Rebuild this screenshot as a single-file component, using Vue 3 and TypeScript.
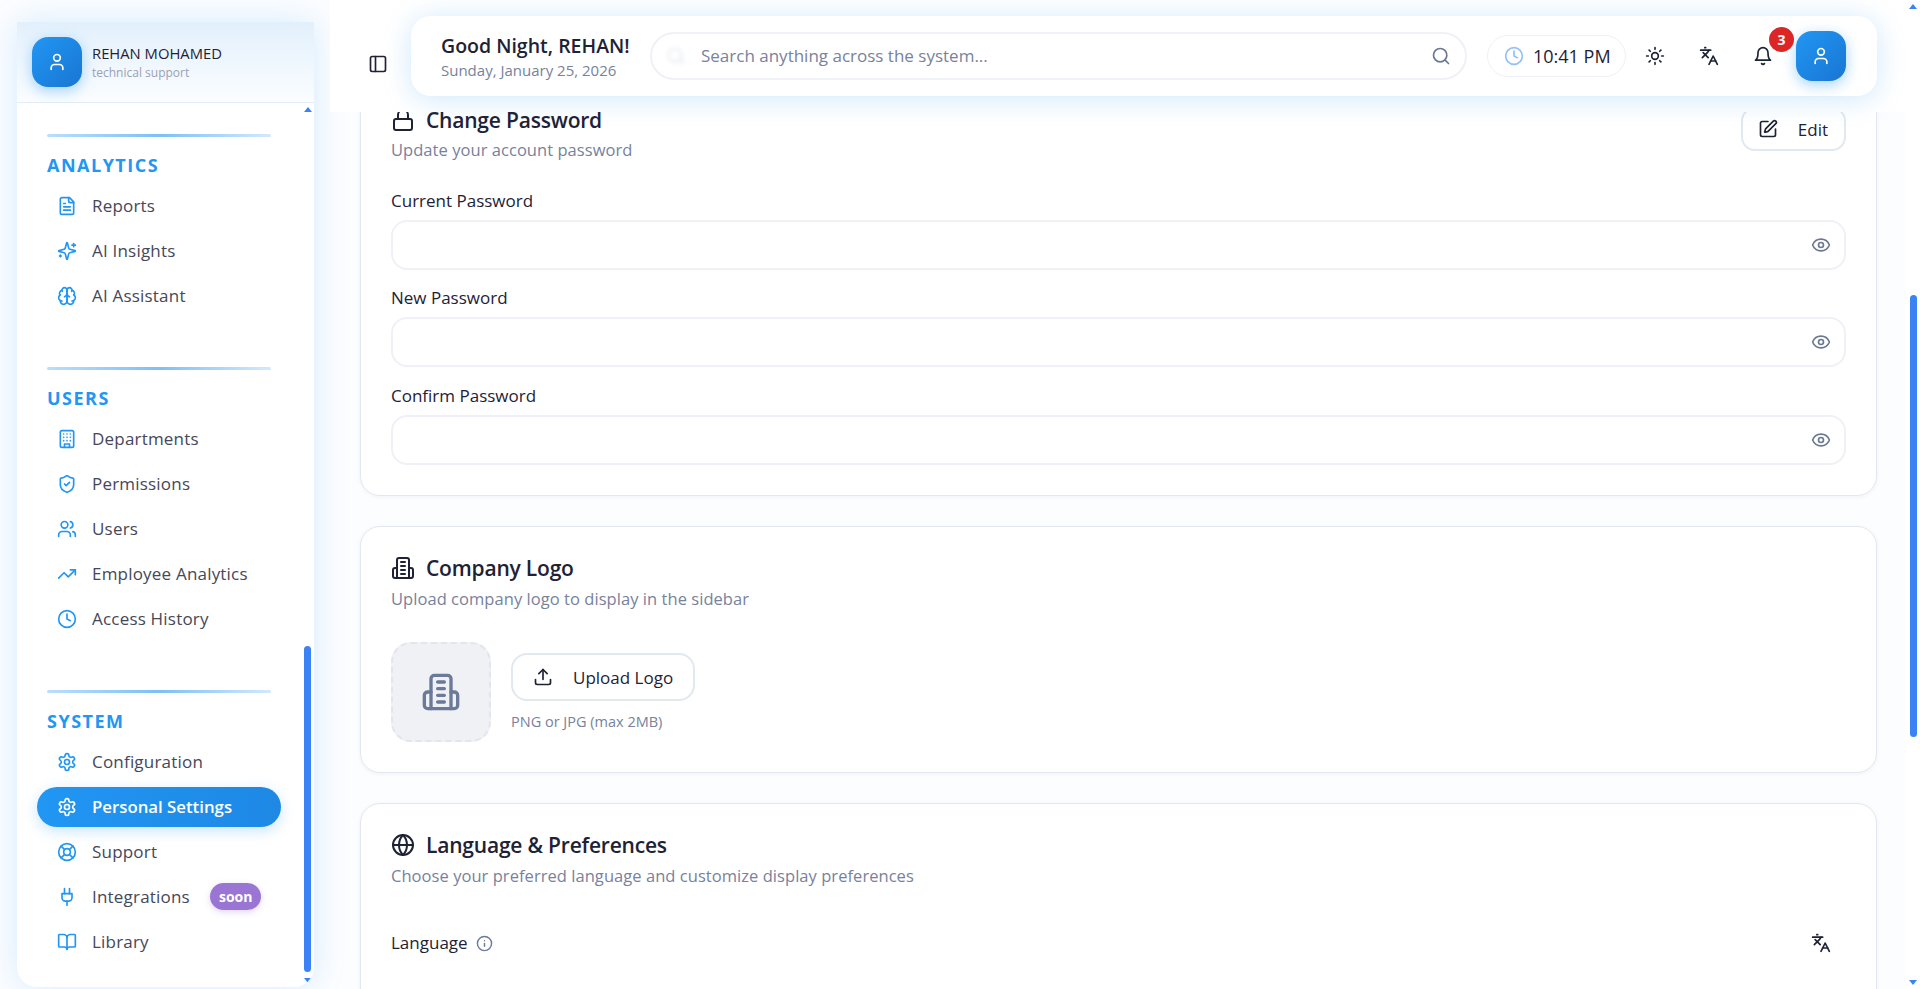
<script setup lang="ts">
import { h } from 'vue'

// Lucide icon bodies
const icons: Record<string, string> = {
  user: '<path d="M19 21v-2a4 4 0 0 0-4-4H9a4 4 0 0 0-4 4v2"/><circle cx="12" cy="7" r="4"/>',
  panel: '<rect width="18" height="18" x="3" y="3" rx="2"/><path d="M9 3v18"/>',
  file: '<path d="M15 2H6a2 2 0 0 0-2 2v16a2 2 0 0 0 2 2h12a2 2 0 0 0 2-2V7Z"/><path d="M14 2v4a2 2 0 0 0 2 2h4"/><path d="M10 9H8"/><path d="M16 13H8"/><path d="M16 17H8"/>',
  sparkles: '<path d="M9.937 15.5A2 2 0 0 0 8.5 14.063l-6.135-1.582a.5.5 0 0 1 0-.962L8.5 9.936A2 2 0 0 0 9.937 8.5l1.582-6.135a.5.5 0 0 1 .963 0L14.063 8.5A2 2 0 0 0 15.5 9.937l6.135 1.581a.5.5 0 0 1 0 .964L15.5 14.063a2 2 0 0 0-1.437 1.437l-1.582 6.135a.5.5 0 0 1-.963 0z"/><path d="M20 3v4"/><path d="M22 5h-4"/><path d="M4 17v2"/><path d="M5 18H3"/>',
  brain: '<path d="M12 5a3 3 0 1 0-5.997.125 4 4 0 0 0-2.526 5.77 4 4 0 0 0 .556 6.588A4 4 0 1 0 12 18Z"/><path d="M12 5a3 3 0 1 1 5.997.125 4 4 0 0 1 2.526 5.77 4 4 0 0 1-.556 6.588A4 4 0 1 1 12 18Z"/><path d="M15 13a4.5 4.5 0 0 1-3-4 4.5 4.5 0 0 1-3 4"/><path d="M17.599 6.5a3 3 0 0 0 .399-1.375"/><path d="M6.003 5.125A3 3 0 0 0 6.401 6.5"/><path d="M3.477 10.896a4 4 0 0 1 .585-.396"/><path d="M19.938 10.5a4 4 0 0 1 .585.396"/><path d="M6 18a4 4 0 0 1-1.967-.516"/><path d="M19.967 17.484A4 4 0 0 1 18 18"/>',
  building: '<rect width="16" height="20" x="4" y="2" rx="2" ry="2"/><path d="M9 22v-4h6v4"/><path d="M8 6h.01"/><path d="M16 6h.01"/><path d="M12 6h.01"/><path d="M12 10h.01"/><path d="M12 14h.01"/><path d="M16 10h.01"/><path d="M16 14h.01"/><path d="M8 10h.01"/><path d="M8 14h.01"/>',
  shield: '<path d="M20 13c0 5-3.5 7.5-7.66 8.95a1 1 0 0 1-.67-.01C7.5 20.5 4 18 4 13V6a1 1 0 0 1 1-1c2 0 4.5-1.2 6.24-2.72a1.17 1.17 0 0 1 1.52 0C14.51 3.81 17 5 19 5a1 1 0 0 1 1 1z"/><path d="m9 12 2 2 4-4"/>',
  users: '<path d="M16 21v-2a4 4 0 0 0-4-4H6a4 4 0 0 0-4 4v2"/><circle cx="9" cy="7" r="4"/><path d="M22 21v-2a4 4 0 0 0-3-3.87"/><path d="M16 3.13a4 4 0 0 1 0 7.75"/>',
  trending: '<polyline points="22 7 13.5 15.5 8.5 10.5 2 17"/><polyline points="16 7 22 7 22 13"/>',
  clock: '<circle cx="12" cy="12" r="10"/><polyline points="12 6 12 12 16 14"/>',
  settings: '<path d="M12.22 2h-.44a2 2 0 0 0-2 2v.18a2 2 0 0 1-1 1.73l-.43.25a2 2 0 0 1-2 0l-.15-.08a2 2 0 0 0-2.73.73l-.22.38a2 2 0 0 0 .73 2.73l.15.1a2 2 0 0 1 1 1.72v.51a2 2 0 0 1-1 1.74l-.15.09a2 2 0 0 0-.73 2.73l.22.38a2 2 0 0 0 2.73.73l.15-.08a2 2 0 0 1 2 0l.43.25a2 2 0 0 1 1 1.73V20a2 2 0 0 0 2 2h.44a2 2 0 0 0 2-2v-.18a2 2 0 0 1 1-1.73l.43-.25a2 2 0 0 1 2 0l.15.08a2 2 0 0 0 2.73-.73l.22-.39a2 2 0 0 0-.73-2.73l-.15-.08a2 2 0 0 1-1-1.74v-.5a2 2 0 0 1 1-1.74l.15-.09a2 2 0 0 0 .73-2.73l-.22-.38a2 2 0 0 0-2.73-.73l-.15.08a2 2 0 0 1-2 0l-.43-.25a2 2 0 0 1-1-1.73V4a2 2 0 0 0-2-2z"/><circle cx="12" cy="12" r="3"/>',
  buoy: '<circle cx="12" cy="12" r="10"/><path d="m4.93 4.93 4.24 4.24"/><path d="m14.83 9.17 4.24-4.24"/><path d="m14.83 14.83 4.24 4.24"/><path d="m9.17 14.83-4.24 4.24"/><circle cx="12" cy="12" r="4"/>',
  plug: '<path d="M12 22v-5"/><path d="M9 8V2"/><path d="M15 8V2"/><path d="M18 8v5a4 4 0 0 1-4 4h-4a4 4 0 0 1-4-4V8Z"/>',
  book: '<path d="M12 7v14"/><path d="M3 18a1 1 0 0 1-1-1V4a1 1 0 0 1 1-1h5a4 4 0 0 1 4 4 4 4 0 0 1 4-4h5a1 1 0 0 1 1 1v13a1 1 0 0 1-1 1h-6a3 3 0 0 0-3 3 3 3 0 0 0-3-3z"/>',
  search: '<circle cx="11" cy="11" r="8"/><path d="m21 21-4.3-4.3"/>',
  sun: '<circle cx="12" cy="12" r="4"/><path d="M12 2v2"/><path d="M12 20v2"/><path d="m4.93 4.93 1.41 1.41"/><path d="m17.66 17.66 1.41 1.41"/><path d="M2 12h2"/><path d="M20 12h2"/><path d="m6.34 17.66-1.41 1.41"/><path d="m19.07 4.93-1.41 1.41"/>',
  languages: '<path d="m5 8 6 6"/><path d="m4 14 6-6 2-3"/><path d="M2 5h12"/><path d="M7 2h1"/><path d="m22 22-5-10-5 10"/><path d="M14 18h6"/>',
  bell: '<path d="M6 8a6 6 0 0 1 12 0c0 7 3 9 3 9H3s3-2 3-9"/><path d="M10.3 21a1.94 1.94 0 0 0 3.4 0"/>',
  pen: '<path d="M12 3H5a2 2 0 0 0-2 2v14a2 2 0 0 0 2 2h14a2 2 0 0 0 2-2v-7"/><path d="M18.375 2.625a1 1 0 0 1 3 3l-9.013 9.014a2 2 0 0 1-.853.505l-2.873.84a.5.5 0 0 1-.62-.62l.84-2.873a2 2 0 0 1 .506-.852z"/>',
  eye: '<path d="M2.062 12.348a1 1 0 0 1 0-.696 10.75 10.75 0 0 1 19.876 0 1 1 0 0 1 0 .696 10.75 10.75 0 0 1-19.876 0"/><circle cx="12" cy="12" r="3"/>',
  lock: '<rect width="18" height="11" x="3" y="11" rx="2" ry="2"/><path d="M7 11V7a5 5 0 0 1 10 0v4"/>',
  company: '<path d="M6 22V4a2 2 0 0 1 2-2h8a2 2 0 0 1 2 2v18Z"/><path d="M6 12H4a2 2 0 0 0-2 2v6a2 2 0 0 0 2 2h2"/><path d="M18 12h2a2 2 0 0 1 2 2v6a2 2 0 0 1-2 2h-2"/><path d="M10 6h4"/><path d="M10 10h4"/><path d="M10 14h4"/><path d="M10 18h4"/>',
  upload: '<path d="M21 15v4a2 2 0 0 1-2 2H5a2 2 0 0 1-2-2v-4"/><polyline points="17 8 12 3 7 8"/><line x1="12" x2="12" y1="3" y2="15"/>',
  globe: '<circle cx="12" cy="12" r="10"/><path d="M12 2a14.5 14.5 0 0 0 0 20 14.5 14.5 0 0 0 0-20"/><path d="M2 12h20"/>',
  info: '<circle cx="12" cy="12" r="10"/><path d="M12 16v-4"/><path d="M12 8h.01"/>',
}

const Icon = (props: { name: string }) =>
  h('svg', {
    xmlns: 'http://www.w3.org/2000/svg',
    viewBox: '0 0 24 24',
    fill: 'none',
    stroke: 'currentColor',
    'stroke-width': 2,
    'stroke-linecap': 'round',
    'stroke-linejoin': 'round',
    innerHTML: icons[props.name],
  })
Icon.props = ['name']

interface NavItem {
  label: string
  icon: string
  active?: boolean
  badge?: string
}

const sections: { title: string; items: NavItem[] }[] = [
  {
    title: 'ANALYTICS',
    items: [
      { label: 'Reports', icon: 'file' },
      { label: 'AI Insights', icon: 'sparkles' },
      { label: 'AI Assistant', icon: 'brain' },
    ],
  },
  {
    title: 'USERS',
    items: [
      { label: 'Departments', icon: 'building' },
      { label: 'Permissions', icon: 'shield' },
      { label: 'Users', icon: 'users' },
      { label: 'Employee Analytics', icon: 'trending' },
      { label: 'Access History', icon: 'clock' },
    ],
  },
  {
    title: 'SYSTEM',
    items: [
      { label: 'Configuration', icon: 'settings' },
      { label: 'Personal Settings', icon: 'settings', active: true },
      { label: 'Support', icon: 'buoy' },
      { label: 'Integrations', icon: 'plug', badge: 'soon' },
      { label: 'Library', icon: 'book' },
    ],
  },
]

const passwordFields = ['Current Password', 'New Password', 'Confirm Password']
</script>

<template>
  <div class="shell">
    <aside class="sidebar">
      <div class="side-head">
        <div class="avatar"><Icon name="user" class="avatar-ic" /></div>
        <div class="who">
          <div class="who-name">REHAN MOHAMED</div>
          <div class="who-role">technical support</div>
        </div>
      </div>
      <nav class="nav">
        <section v-for="s in sections" :key="s.title" class="nav-section">
          <div class="nav-rule"></div>
          <h4 class="nav-title">{{ s.title }}</h4>
          <a
            v-for="item in s.items"
            :key="item.label"
            class="nav-item"
            :class="{ active: item.active }"
          >
            <Icon :name="item.icon" class="nav-ic" />
            <span class="nav-label">{{ item.label }}</span>
            <span v-if="item.badge" class="soon">{{ item.badge }}</span>
          </a>
        </section>
      </nav>
      <!-- custom scrollbar -->
      <i class="arrow up side-up"></i>
      <i class="side-thumb"></i>
      <i class="arrow down side-down"></i>
    </aside>

    <main class="main">
      <header class="header">
        <button class="toggle"><Icon name="panel" class="toggle-ic" /></button>
        <div class="topbar">
          <div class="greet">
            <div class="greet-title">Good Night, REHAN!</div>
            <div class="greet-date">Sunday, January 25, 2026</div>
          </div>
          <div class="search">
            <Icon name="search" class="search-ghost" />
            <span class="search-text">Search anything across the system...</span>
            <Icon name="search" class="search-ic" />
          </div>
          <div class="time">
            <Icon name="clock" class="time-ic" />
            <span class="time-text">10:41 PM</span>
          </div>
          <div class="tool first"><Icon name="sun" class="tool-ic" /></div>
          <div class="tool"><Icon name="languages" class="tool-ic" /></div>
          <div class="tool bell">
            <Icon name="bell" class="tool-ic" />
            <span class="bell-count">3</span>
          </div>
          <div class="avatar"><Icon name="user" class="avatar-ic" /></div>
        </div>
      </header>

      <div class="content">
        <div class="stack">
          <section class="card pass-card">
            <div class="card-head">
              <div>
                <h3 class="card-title"><Icon name="lock" class="title-ic" />Change Password</h3>
                <p class="card-desc">Update your account password</p>
              </div>
              <button class="btn edit-btn"><Icon name="pen" class="btn-ic" />Edit</button>
            </div>
            <div v-for="f in passwordFields" :key="f" class="field">
              <label class="field-label">{{ f }}</label>
              <div class="input"><Icon name="eye" class="eye-ic" /></div>
            </div>
          </section>

          <section class="card logo-card">
            <h3 class="card-title"><Icon name="company" class="title-ic" />Company Logo</h3>
            <p class="card-desc">Upload company logo to display in the sidebar</p>
            <div class="logo-row">
              <div class="logo-box"><Icon name="company" class="logo-ic" /></div>
              <div class="logo-side">
                <button class="btn upload-btn"><Icon name="upload" class="btn-ic" />Upload Logo</button>
                <div class="hint">PNG or JPG (max 2MB)</div>
              </div>
            </div>
          </section>

          <section class="card lang-card">
            <h3 class="card-title"><Icon name="globe" class="title-ic" />Language &amp; Preferences</h3>
            <p class="card-desc">Choose your preferred language and customize display preferences</p>
            <div class="lang-row">
              <span class="field-label inline">Language <Icon name="info" class="info-ic" /></span>
              <Icon name="languages" class="lang-ic" />
            </div>
          </section>
        </div>
      </div>
    </main>

    <div class="page-bar">
      <i class="arrow up page-up"></i>
      <i class="page-thumb"></i>
      <i class="arrow down page-down"></i>
    </div>
  </div>
</template>

<style>
html,
body {
  margin: 0;
  height: 100%;
  overflow: hidden;
  background: #fff;
}
</style>

<style scoped>
.shell {
  display: flex;
  height: 989px;
  overflow: hidden;
  background: #fcfdff;
  font-family: "Open Sans", "Noto Sans", sans-serif;
  color: #1e2235;
  position: relative;
}

/* Sidebar */
.sidebar {
  position: relative;
  flex: none;
  width: 297px;
  height: 965px;
  margin: 22px 17px 2px 17px;
  background: #fff;
  border-radius: 0 0 20px 20px;
  box-shadow: 0 0 32px rgba(33, 150, 243, 0.18);
  overflow: hidden;
}

.side-head {
  display: flex;
  align-items: center;
  gap: 10px;
  height: 80px;
  padding: 0 15px;
  background: linear-gradient(180deg, #e2f0fc 0%, #fbfdff 100%);
  border-bottom: 1px solid #e3edf7;
}

.avatar {
  display: flex;
  align-items: center;
  justify-content: center;
  flex: none;
  width: 50px;
  height: 50px;
  border-radius: 16px;
  background: linear-gradient(135deg, #2196f3, #1976d2);
  box-shadow: 0 4px 14px rgba(33, 150, 243, 0.4);
  color: #fff;
}

.avatar-ic {
  width: 20px;
  height: 20px;
}

.who-name {
  font-size: 14.8px;
  font-weight: 500;
  line-height: 18px;
  color: #1e2235;
}

.who-role {
  margin-top: 3px;
  font-size: 12px;
  line-height: 16px;
  color: #9aa1b4;
}

.nav {
  padding-top: 31px;
}

.nav-section {
  padding: 0 33px 0 20px;
  margin-bottom: 51px;
}

.nav-rule {
  height: 3px;
  margin: 0 0 16px 10px;
  border-radius: 2px;
  width: 224px;
  background: linear-gradient(90deg, #bbdefb, #7cc0f7 50%, #d3e9fc);
}

.nav-title {
  margin: 0 0 9px 10px;
  font-size: 18px;
  line-height: 24px;
  font-weight: 700;
  letter-spacing: 1.5px;
  color: #2196f3;
}

.nav-item {
  display: flex;
  align-items: center;
  gap: 15px;
  height: 40px;
  margin-bottom: 5px;
  padding-left: 20px;
  border-radius: 20px;
  font-size: 17px;
  font-weight: 500;
  letter-spacing: 0.2px;
  color: #45475a;
}

.nav-item:last-child {
  margin-bottom: 0;
}

.nav-label {
  margin-bottom: 2px;
}

.nav-ic {
  flex: none;
  width: 20px;
  height: 20px;
  color: #2196f3;
}

.nav-item.active {
  background: linear-gradient(90deg, #2196f3, #1e88e5);
  box-shadow: 0 4px 14px rgba(33, 150, 243, 0.25);
  color: #fff;
  font-size: 16.8px;
  font-weight: 600;
  letter-spacing: 0;
}

.nav-item.active .nav-ic {
  color: #fff;
}

.soon {
  margin: 0 0 1px 5px;
  padding: 0 9px;
  height: 27px;
  line-height: 27px;
  border-radius: 14px;
  background: #9b75d4;
  box-shadow: 0 2px 6px rgba(155, 117, 212, 0.3);
  color: #fff;
  font-size: 14px;
  font-weight: 700;
  letter-spacing: 0;
}

.arrow {
  position: absolute;
  width: 0;
  height: 0;
  border-left: 4px solid transparent;
  border-right: 4px solid transparent;
}

.arrow.up {
  border-bottom: 5px solid #3b82f6;
}

.arrow.down {
  border-top: 5px solid #3b82f6;
}

.side-up {
  top: 85px;
  right: 2px;
}

.side-down {
  bottom: 4px;
  right: 2px;
}

.side-thumb {
  position: absolute;
  top: 624px;
  right: 3px;
  width: 7px;
  height: 326px;
  border-radius: 4px;
  background: #3b82f6;
}

/* Main column */
.main {
  flex: 1;
  min-width: 0;
  display: flex;
  flex-direction: column;
  margin-left: -1px;
  margin-right: 15px;
}

.header {
  position: relative;
  z-index: 2;
  flex: none;
  display: flex;
  height: 112px;
  padding: 16px 28px 0 36px;
  box-sizing: border-box;
  background: #fff;
}

.toggle {
  flex: none;
  display: flex;
  align-items: center;
  justify-content: center;
  width: 24px;
  height: 96px;
  margin-right: 21px;
  padding: 0;
  border: 0;
  background: none;
  color: #1e2235;
}

.toggle-ic {
  width: 20px;
  height: 20px;
}

.topbar {
  flex: 1;
  display: flex;
  align-items: center;
  height: 80px;
  padding: 0 31px 0 30px;
  border-radius: 20px;
  background: #fff;
  box-shadow: 0 3px 28px rgba(33, 150, 243, 0.22);
}

.greet {
  flex: none;
  width: 209px;
}

.greet-title {
  font-size: 19.5px;
  line-height: 26px;
  font-weight: 600;
  color: #1e2235;
}

.greet-date {
  margin-top: 2px;
  font-size: 15px;
  line-height: 18px;
  color: #77829c;
}

.search {
  flex: none;
  display: flex;
  align-items: center;
  width: 817px;
  height: 48px;
  box-sizing: border-box;
  padding: 0 14px;
  border: 2px solid #f0f1f6;
  border-radius: 24px;
}

.search-ghost {
  flex: none;
  width: 20px;
  height: 20px;
  margin-right: 15px;
  color: #e6e8ee;
  filter: blur(2px);
}

.search-text {
  flex: 1;
  margin-bottom: 2px;
  font-size: 17px;
  color: #77829c;
}

.search-ic {
  width: 20px;
  height: 20px;
  color: #6b7890;
}

.time {
  flex: none;
  display: flex;
  align-items: center;
  gap: 9px;
  height: 42px;
  margin-left: 20px;
  padding: 0 16px;
  box-sizing: border-box;
  width: 139px;
  border: 1px solid #f0f1f6;
  border-radius: 21px;
  font-size: 18px;
  font-weight: 500;
  white-space: nowrap;
}

.time-text {
  margin-bottom: 1px;
}

.time-ic {
  flex: none;
  width: 20px;
  height: 20px;
  color: #93c1f6;
}

.tool {
  flex: none;
  display: flex;
  align-items: center;
  justify-content: center;
  width: 40px;
  height: 40px;
  margin-left: 14px;
  color: #1e2235;
}

.tool.first {
  margin-left: 9px;
}

.tool-ic {
  width: 20px;
  height: 20px;
}

.bell {
  position: relative;
  margin-right: 13px;
}

.bell-count {
  position: absolute;
  top: -9px;
  right: -11px;
  width: 25px;
  height: 25px;
  border-radius: 50%;
  background: #dc2626;
  color: #fff;
  font-size: 14px;
  font-weight: 700;
  line-height: 25px;
  text-align: center;
}

/* Content */
.content {
  flex: 1;
  min-height: 0;
  overflow: hidden;
  padding: 0 28px 0 30px;
}

.stack {
  display: flex;
  flex-direction: column;
  gap: 30px;
  margin-top: -40px;
}

.card {
  flex: none;
  padding: 0 30px;
  border: 1px solid #e3e8f0;
  border-radius: 20px;
  background: #fff;
  box-shadow: 0 1px 4px rgba(30, 40, 80, 0.05);
}

.pass-card {
  padding-top: 32px;
  height: 424px;
  box-sizing: border-box;
}

.logo-card {
  height: 247px;
  box-sizing: border-box;
  padding-top: 26px;
}

.lang-card {
  height: 320px;
  box-sizing: border-box;
  padding-top: 26px;
}

.card-head {
  display: flex;
  justify-content: space-between;
  align-items: flex-start;
}

.card-title {
  display: flex;
  align-items: center;
  gap: 11px;
  margin: 0;
  font-size: 21px;
  line-height: 30px;
  font-weight: 600;
  letter-spacing: -0.2px;
  color: #1e2235;
}

.title-ic {
  flex: none;
  width: 24px;
  height: 24px;
}

.card-desc {
  margin: 3.5px 0 0;
  font-size: 16.5px;
  line-height: 24px;
  letter-spacing: 0.05px;
  color: #77829c;
}

.pass-card .card-desc {
  margin-top: 2.5px;
}

.btn {
  display: inline-flex;
  align-items: center;
  gap: 20px;
  height: 48px;
  padding: 0 16px 0 15px;
  border: 2px solid #e2e8f0;
  border-radius: 16px;
  background: #fff;
  font-family: inherit;
  font-size: 17px;
  font-weight: 500;
  color: #1e2235;
}

.edit-btn {
  height: 44px;
  margin-top: 2px;
  border-radius: 14px;
}

.btn-ic {
  width: 20px;
  height: 20px;
}

.field {
  margin-top: 18.5px;
}

.card-head + .field {
  margin-top: 29px;
}

.field-label {
  display: block;
  font-size: 17px;
  line-height: 20px;
  font-weight: 500;
  color: #1e2235;
}

.field-label.inline {
  display: inline-flex;
  align-items: center;
  gap: 8px;
}

.input {
  display: flex;
  align-items: center;
  justify-content: flex-end;
  height: 50px;
  margin-top: 9px;
  padding: 0 13px;
  box-sizing: border-box;
  border: 2px solid #f0f1f6;
  border-radius: 16px;
}

.eye-ic {
  width: 20px;
  height: 20px;
  color: #6b7890;
}

.logo-row {
  display: flex;
  gap: 20px;
  margin-top: 31.5px;
}

.logo-box {
  display: flex;
  align-items: center;
  justify-content: center;
  width: 100px;
  height: 100px;
  box-sizing: border-box;
  border: 2px dashed #e2e5ec;
  border-radius: 20px;
  background: #eff1f5;
}

.logo-ic {
  width: 40px;
  height: 40px;
  color: #6b7a99;
}

.logo-side {
  padding-top: 11px;
}

.upload-btn {
  padding: 0 20px;
}

.hint {
  margin-top: 12px;
  font-size: 14.5px;
  line-height: 18px;
  color: #77829c;
}

.lang-row {
  display: flex;
  align-items: center;
  justify-content: space-between;
  margin-top: 45.5px;
  padding-right: 15px;
}

.info-ic {
  width: 17px;
  height: 17px;
  color: #6b7a99;
}

.lang-ic {
  width: 20px;
  height: 20px;
  color: #1e2235;
}

/* Page scrollbar */
.page-bar {
  position: absolute;
  top: 0;
  right: 0;
  bottom: 0;
  width: 15px;
  background: #fff;
}

.page-up {
  top: 4px;
  left: 4px;
}

.page-down {
  bottom: 4px;
  left: 4px;
}

.page-thumb {
  position: absolute;
  top: 295px;
  left: 5px;
  width: 7px;
  height: 442px;
  border-radius: 4px;
  background: #3b82f6;
}
</style>
